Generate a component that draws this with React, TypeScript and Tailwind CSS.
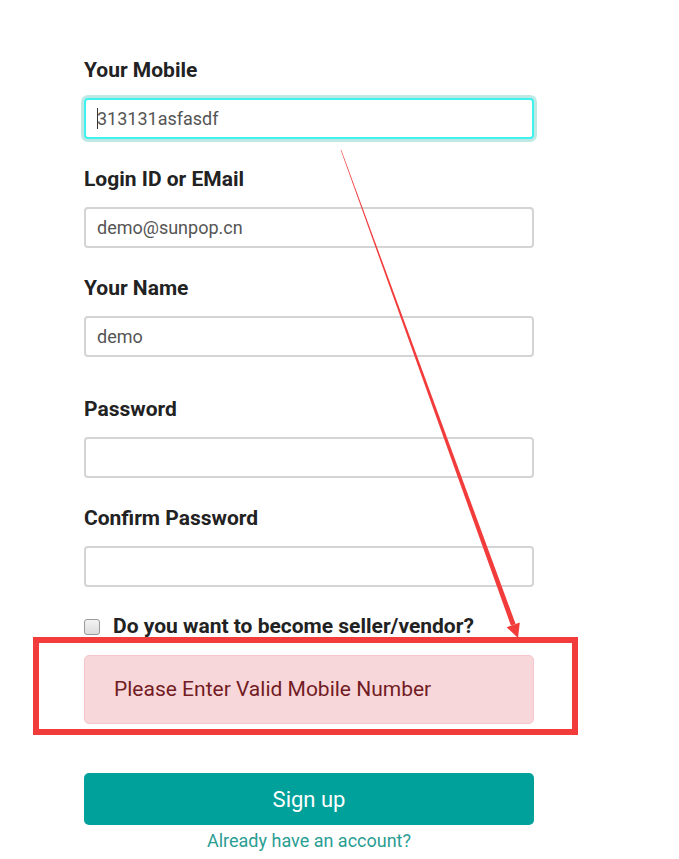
import { FC } from "react";

const font = { fontFamily: "Roboto, 'Noto Sans', sans-serif" };

interface FieldProps {
  label: string;
  value?: string;
  labelClass: string;
  focused?: boolean;
}

const Field: FC<FieldProps> = ({ label, value, labelClass, focused }) => (
  <>
    <label className={`block text-[21px] leading-6 font-bold text-[#222] ${labelClass}`}>{label}</label>
    <div
      className={`mt-4 h-[41px] w-[450px] rounded-[4px] bg-white flex items-center px-[11px] text-[18px] text-[#555] ${
        focused
          ? "border-2 border-[#3ef2ef] shadow-[0_0_0_3px_#bfe8e5]"
          : "border-2 border-[#d4d4d4]"
      }`}
    >
      {focused && <span className="w-px h-[21px] bg-[#333] -mr-px"></span>}
      <span>{value}</span>
    </div>
  </>
);

export default function App() {
  return (
    <div className="relative w-[679px] h-[859px] bg-white overflow-hidden" style={font}>
      <div className="pl-[84px] pt-[58px] w-[534px]">
        <Field label="Your Mobile" value="313131asfasdf" labelClass="" focused />
        <Field label="Login ID or EMail" value="demo@sunpop.cn" labelClass="mt-[28px]" />
        <Field label="Your Name" value="demo" labelClass="mt-[28px]" />
        <Field label="Password" labelClass="mt-[40px]" />
        <Field label="Confirm Password" labelClass="mt-[28px]" />

        <div className="mt-[28px] h-6 flex items-center gap-[13px]">
          <span className="w-[16px] h-[16px] rounded-[3px] border border-[#9a9a9a] bg-gradient-to-b from-[#f4f4f4] to-[#dcdcdc]"></span>
          <span className="text-[21px] font-bold text-[#222]">Do you want to become seller/vendor?</span>
        </div>

        <div className="mt-4 h-[69px] w-[450px] rounded-[5px] border border-[#f5c6cb] bg-[#f8d7da] flex items-center pl-[29px] text-[21px] text-[#721c24]">
          Please Enter Valid Mobile Number
        </div>

        <button className="mt-[49px] h-[52px] w-[450px] rounded-[5px] bg-[#00a19a] text-white text-[22px]">
          Sign up
        </button>
        <div className="mt-[6px] w-[450px] text-center text-[18px] leading-5 text-[#2a9d93]">
          Already have an account?
        </div>
      </div>

      {/* annotation: red box + arrow */}
      <div className="absolute left-[33px] top-[637px] w-[545px] h-[98px] border-[6px] border-[#f23b3b]"></div>
      <svg className="absolute left-0 top-0 pointer-events-none" width="679" height="859">
        <polygon points="340.7,150 341.3,150 515.6,624 510.9,625.6" fill="#f23b3b" />
        <polygon points="518,638 519.8,622.4 506.6,627.2" fill="#f23b3b" />
      </svg>
    </div>
  );
}
